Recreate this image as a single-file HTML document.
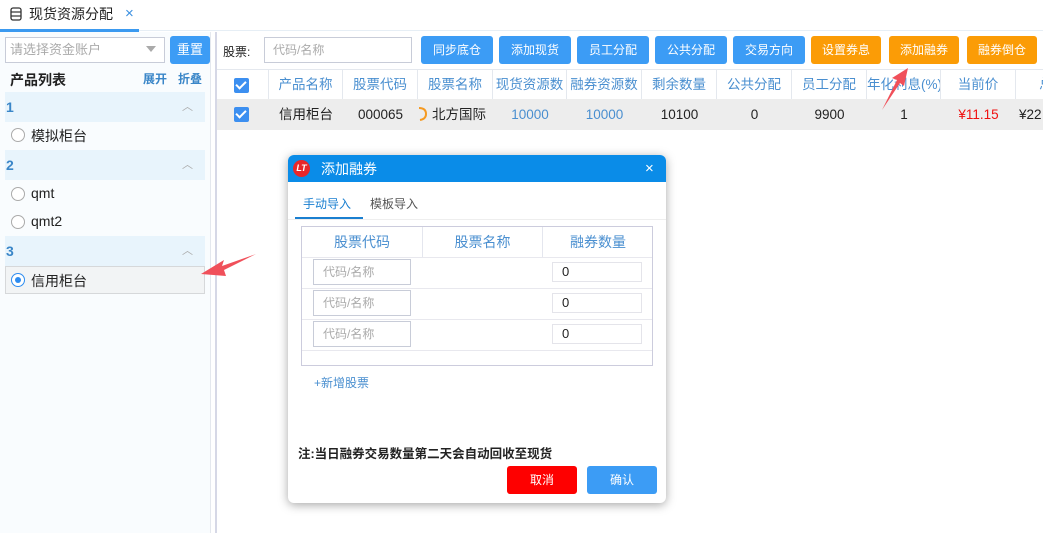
<!DOCTYPE html>
<html><head><meta charset="utf-8"><style>
*{box-sizing:border-box;margin:0;padding:0}
body{width:1043px;height:533px;overflow:hidden;background:#fff;font-family:"Liberation Sans","Noto Sans CJK SC",sans-serif;font-size:13px;color:#222;position:relative}
.a{position:absolute}
.btn{position:absolute;top:36px;height:28px;border-radius:3px;color:#fff;font-size:12px;text-align:center;line-height:28px}
.bl{background:#3c9cf5}.or{background:#fb9c06}
.th{position:absolute;top:70px;height:29px;line-height:29px;text-align:center;color:#4a8fd0;font-size:13.5px;border-right:1px solid #e4e8ee;overflow:hidden;white-space:nowrap}
.td{position:absolute;top:99px;height:31px;line-height:31px;text-align:center;font-size:13.5px;white-space:nowrap;overflow:hidden}
.cb{position:absolute;width:15px;height:15px;background:#3c8ff0;border-radius:2px}
.cb:after{content:"";position:absolute;left:4px;top:1px;width:4px;height:8px;border:solid #fff;border-width:0 2px 2px 0;transform:rotate(45deg)}
.grp{position:absolute;left:5px;width:200px;height:30px;background:#e8f4fc;color:#3a86c8;font-weight:bold;font-size:14px;line-height:30px;padding-left:1px}
.grp i{position:absolute;right:12px;top:0;font-style:normal;color:#aaa;font-weight:normal;font-size:11px}
.rad{position:absolute;left:11px;width:14px;height:14px;border:1px solid #aaa;border-radius:50%;background:#fff}
.lbl{position:absolute;left:31px;font-size:14px}
.inp{position:absolute;border:1px solid #c8ccd8;background:#fff;color:#aaa;font-size:12px;padding-left:9px}
</style></head><body>
<div class="a" style="left:0;top:0;width:1043px;height:31px;border-bottom:1px solid #e6eef5"></div>
<svg class="a" style="left:10px;top:7px" width="12" height="14" viewBox="0 0 12 14"><rect x="1" y="1" width="10" height="12" rx="2" fill="none" stroke="#333" stroke-width="1.3"/><line x1="1" y1="5" x2="11" y2="5" stroke="#333" stroke-width="1.2"/><line x1="1" y1="9" x2="11" y2="9" stroke="#333" stroke-width="1.2"/></svg>
<div class="a" style="left:29px;top:4px;font-size:14px">现货资源分配</div>
<div class="a" style="left:125px;top:5px;font-size:15px;color:#3a8fe0">×</div>
<div class="a" style="left:0;top:29px;width:139px;height:3px;background:#3b9af0"></div>
<div class="a" style="left:0;top:32px;width:210px;height:501px;background:#f9fcfe"></div>
<div class="a" style="left:210px;top:32px;width:1px;height:501px;background:#e4e8ee"></div>
<div class="a" style="left:215px;top:32px;width:2px;height:501px;background:#d6d8e6"></div>
<div class="inp" style="left:5px;top:37px;width:160px;height:26px;line-height:24px;font-size:13px;padding-left:4px">请选择资金账户</div>
<div class="a" style="left:146px;top:46px;border:5px solid transparent;border-top:6px solid #aaa"></div>
<div class="btn bl" style="left:170px;top:36px;width:40px;font-size:13px">重置</div>
<div class="a" style="left:10px;top:70px;font-size:14px;font-weight:bold">产品列表</div>
<div class="a" style="left:143px;top:70px;font-size:12px;font-weight:bold;color:#3a86c8">展开</div>
<div class="a" style="left:178px;top:70px;font-size:12px;font-weight:bold;color:#3a86c8">折叠</div>
<div class="grp" style="top:92px">1<i>︿</i></div>
<div class="rad" style="top:128px"></div><div class="lbl" style="top:126px">模拟柜台</div>
<div class="grp" style="top:150px">2<i>︿</i></div>
<div class="rad" style="top:187px"></div><div class="lbl" style="top:185px">qmt</div>
<div class="rad" style="top:215px"></div><div class="lbl" style="top:213px">qmt2</div>
<div class="grp" style="top:236px">3<i>︿</i></div>
<div class="a" style="left:5px;top:266px;width:200px;height:28px;background:#f2f4f5;border:1px solid #d6d8da"></div>
<div class="rad" style="top:273px;border:1.5px solid #2d8cf0"></div><div class="a" style="left:15px;top:277px;width:6px;height:6px;border-radius:50%;background:#2d8cf0"></div>
<div class="lbl" style="top:271px">信用柜台</div>
<svg class="a" style="left:198px;top:250px" width="60" height="30"><path d="M58 4 L24 16 L26 10 L3 24 L28 26 L26 20 Z" fill="#f0505a"/></svg>
<div class="a" style="left:223px;top:43px;font-size:12px">股票:</div>
<div class="inp" style="left:264px;top:37px;width:148px;height:26px;line-height:24px;padding-left:8px">代码/名称</div>
<div class="btn bl" style="left:421px;width:72px">同步底仓</div>
<div class="btn bl" style="left:499px;width:72px">添加现货</div>
<div class="btn bl" style="left:577px;width:72px">员工分配</div>
<div class="btn bl" style="left:655px;width:72px">公共分配</div>
<div class="btn bl" style="left:733px;width:72px">交易方向</div>
<div class="btn or" style="left:811px;width:70px">设置券息</div>
<div class="btn or" style="left:889px;width:70px">添加融券</div>
<div class="btn or" style="left:967px;width:70px">融券倒仓</div>
<div class="a" style="left:217px;top:69px;width:826px;height:1px;background:#e4e8ee"></div>
<div class="a" style="left:217px;top:99px;width:826px;height:31px;background:#ededed"></div>
<div class="th" style="left:217px;width:52px"></div>
<div class="cb" style="left:234px;top:78px"></div>
<div class="th" style="left:269px;width:74px">产品名称</div>
<div class="th" style="left:343px;width:75px">股票代码</div>
<div class="th" style="left:418px;width:75px">股票名称</div>
<div class="th" style="left:493px;width:74px">现货资源数</div>
<div class="th" style="left:567px;width:75px">融券资源数</div>
<div class="th" style="left:642px;width:75px">剩余数量</div>
<div class="th" style="left:717px;width:75px">公共分配</div>
<div class="th" style="left:792px;width:75px">员工分配</div>
<div class="th" style="left:867px;width:74px;text-align:left">年化利息(%)</div>
<div class="th" style="left:941px;width:75px">当前价</div>
<div class="th" style="left:1016px;width:60px;border:0">总</div>
<div class="cb" style="left:234px;top:107px"></div>
<div class="td" style="left:269px;width:74px">信用柜台</div>
<div class="td" style="left:343px;width:75px">000065</div>
<svg class="a" style="left:417px;top:106px" width="12" height="16"><path d="M2 2 Q9 2 9 8 Q9 13 3 14" fill="none" stroke="#f59a22" stroke-width="2"/></svg>
<div class="td" style="left:432px;width:63px;text-align:left">北方国际</div>
<div class="td" style="left:493px;width:74px;color:#4a8fd0">10000</div>
<div class="td" style="left:567px;width:75px;color:#4a8fd0">10000</div>
<div class="td" style="left:642px;width:75px">10100</div>
<div class="td" style="left:717px;width:75px">0</div>
<div class="td" style="left:792px;width:75px">9900</div>
<div class="td" style="left:867px;width:74px">1</div>
<div class="td" style="left:941px;width:75px;color:#f01010">¥11.15</div>
<div class="td" style="left:1016px;width:40px;text-align:left;padding-left:3px">¥22</div>
<svg class="a" style="left:880px;top:64px" width="30" height="50"><path d="M28 4 L12 14 L17 16 L2 46 L20 19 L24 22 Z" fill="#f0505a"/></svg>
<div class="a" style="left:288px;top:155px;width:378px;height:348px;background:#fff;border-radius:6px;box-shadow:0 2px 10px rgba(0,0,0,.35);overflow:hidden">
 <div class="a" style="left:0;top:0;width:378px;height:27px;background:#0a8ce8"></div>
 <div class="a" style="left:5px;top:5px;width:17px;height:17px;border-radius:50%;background:#e8262a;color:#fff;font-size:9px;font-weight:bold;text-align:center;line-height:17px;font-style:italic">LT</div>
 <div class="a" style="left:33px;top:4px;color:#fff;font-size:14px">添加融券</div>
 <div class="a" style="left:357px;top:5px;color:#fff;font-size:15px">×</div>
 <div class="a" style="left:15px;top:40px;font-size:12px;color:#1a7fd0">手动导入</div>
 <div class="a" style="left:82px;top:40px;font-size:12px;color:#555">模板导入</div>
 <div class="a" style="left:7px;top:62px;width:68px;height:2px;background:#1a7fd0"></div>
 <div class="a" style="left:0;top:64px;width:378px;height:1px;background:#eee"></div>
 <div class="a" style="left:13px;top:71px;width:352px;height:140px;border:1px solid #ccd"></div>
 <div class="a" style="left:14px;top:72px;width:121px;height:30px;line-height:30px;text-align:center;color:#4a8fd0;font-size:14px;border-right:1px solid #e4e6ee">股票代码</div>
 <div class="a" style="left:135px;top:72px;width:120px;height:30px;line-height:30px;text-align:center;color:#4a8fd0;font-size:14px;border-right:1px solid #e4e6ee">股票名称</div>
 <div class="a" style="left:255px;top:72px;width:110px;height:30px;line-height:30px;text-align:center;color:#4a8fd0;font-size:14px">融券数量</div>
 <div class="a" style="left:14px;top:102px;width:350px;height:1px;background:#e8e8ee"></div>
 <div class="a" style="left:14px;top:133px;width:350px;height:1px;background:#e8e8ee"></div>
 <div class="a" style="left:14px;top:164px;width:350px;height:1px;background:#e8e8ee"></div>
 <div class="a" style="left:14px;top:195px;width:350px;height:1px;background:#e8e8ee"></div>
 <div class="inp" style="left:25px;top:104px;width:98px;height:26px;line-height:24px">代码/名称</div>
 <div class="inp" style="left:25px;top:135px;width:98px;height:26px;line-height:24px">代码/名称</div>
 <div class="inp" style="left:25px;top:166px;width:98px;height:26px;line-height:24px">代码/名称</div>
 <div class="inp" style="left:264px;top:107px;width:90px;height:20px;line-height:18px;color:#222;border-color:#e4e4ea;font-size:13px">0</div>
 <div class="inp" style="left:264px;top:138px;width:90px;height:20px;line-height:18px;color:#222;border-color:#e4e4ea;font-size:13px">0</div>
 <div class="inp" style="left:264px;top:169px;width:90px;height:20px;line-height:18px;color:#222;border-color:#e4e4ea;font-size:13px">0</div>
 <div class="a" style="left:26px;top:219px;font-size:12px;color:#4a8fd0">+新增股票</div>
 <div class="a" style="left:10px;top:288px;font-size:12.5px;font-weight:bold">注:当日融券交易数量第二天会自动回收至现货</div>
 <div class="a" style="left:219px;top:311px;width:70px;height:28px;background:#fe0000;border-radius:3px;color:#fff;font-size:12px;text-align:center;line-height:28px">取消</div>
 <div class="a" style="left:299px;top:311px;width:70px;height:28px;background:#3c9cf5;border-radius:3px;color:#fff;font-size:12px;text-align:center;line-height:28px">确认</div>
</div>
</body></html>
